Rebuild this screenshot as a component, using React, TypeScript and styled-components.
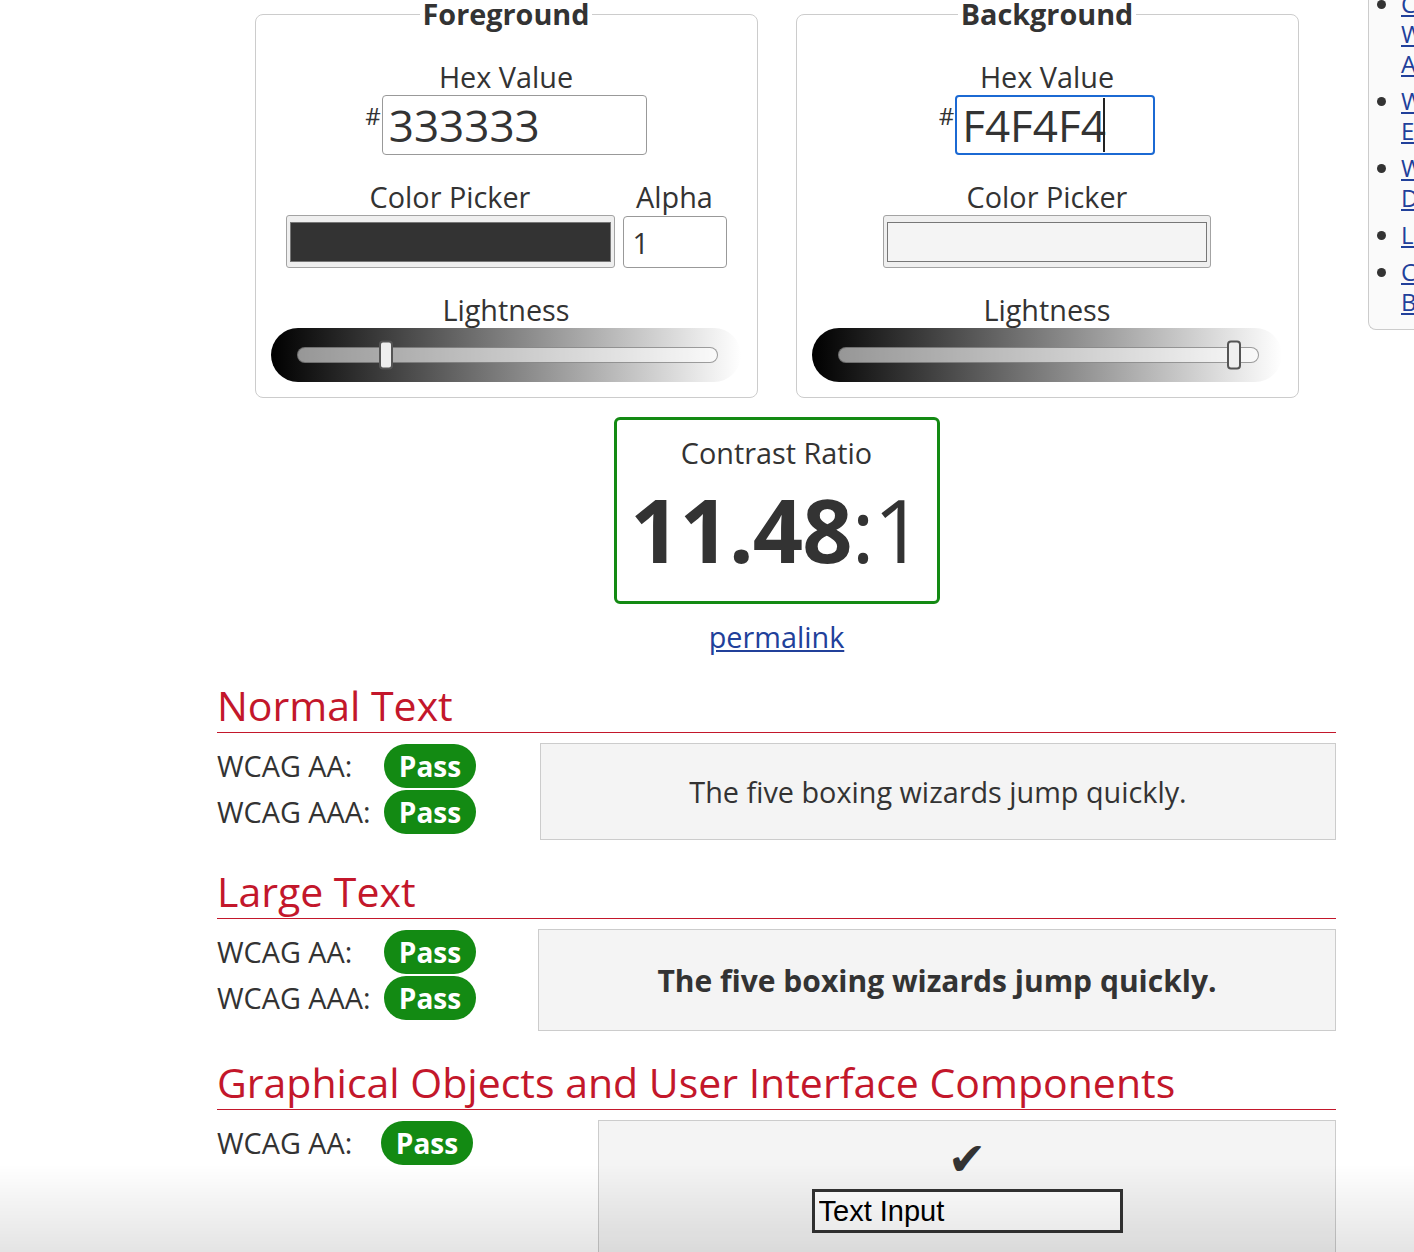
import React from "react";
import styled, { createGlobalStyle } from "styled-components";

const GlobalStyle = createGlobalStyle`
  html, body {
    margin: 0;
    padding: 0;
    background: #fff;
    overflow: hidden;
  }
  body {
    font-family: "Open Sans", "Noto Sans", sans-serif;
    color: #333;
  }
`;

const GREEN = "#138a13";
const RED = "#c3172b";
const LINK = "#21409a";

const Page = styled.div`
  display: flex;
  align-items: flex-start;
  width: 1414px;
  box-sizing: border-box;
  padding-left: 217px;
  margin-top: -40px;
  overflow: hidden;
`;

const Main = styled.main`
  width: 1119px;
  flex-shrink: 0;
  padding-top: 35px;
`;

const Sidebar = styled.aside`
  width: 153px;
  flex-shrink: 0;
  margin-left: 32px;
  background: #fafafa;
  border-left: 1px solid #ccc;
  border-bottom: 1px solid #ccc;
  border-bottom-left-radius: 8px;
`;

const SideList = styled.ul`
  margin: 0;
  padding: 29px 0 12px 32px;
  font-size: 24px;
  line-height: 30px;
  li + li {
    margin-top: 7px;
  }
  a {
    color: ${LINK};
    text-decoration: underline;
  }
`;

const PickerRow = styled.div`
  display: flex;
  justify-content: center;
  gap: 38px;
`;

const Fieldset = styled.fieldset`
  width: 503px;
  box-sizing: border-box;
  min-width: 0;
  margin: 0;
  padding: 26px 15px 15px;
  border: 1px solid #ccc;
  border-radius: 8px;
`;

const Legend = styled.legend`
  margin: 0 auto;
  padding: 0 3px;
  font-size: 28.8px;
  font-weight: 700;
  line-height: 38px;
  color: #333;
`;

const Inner = styled.div`
  display: flex;
  flex-direction: column;
  align-items: center;
`;

const Label = styled.div<{ $gap?: number }>`
  font-size: 28.8px;
  line-height: 36px;
  text-align: center;
  white-space: nowrap;
  margin-top: ${(p) => p.$gap ?? 0}px;
`;

const HexGroup = styled.div`
  display: flex;
  align-items: flex-start;
  height: 60px;
`;

const Hash = styled.span`
  font-size: 24px;
  line-height: 30px;
  margin-top: 6px;
  margin-right: 1px;
`;

const HexBox = styled.div`
  position: relative;
`;

const HexInput = styled.input<{ $width: number; $focused?: boolean }>`
  width: ${(p) => p.$width}px;
  height: 60px;
  box-sizing: border-box;
  border: ${(p) => (p.$focused ? "2px solid #1b69d3" : "1px solid #999")};
  border-radius: 4px;
  padding: 0 ${(p) => (p.$focused ? 5 : 6)}px;
  font-family: "Open Sans", sans-serif;
  font-size: 44px;
  color: #333;
  background: #fff;
  outline: none;
`;

const Caret = styled.span`
  position: absolute;
  top: 3px;
  bottom: 3px;
  width: 2px;
  background: #222;
`;

const PickerColumns = styled.div`
  display: flex;
  gap: 8px;
  align-items: flex-start;
`;

const Column = styled.div`
  display: flex;
  flex-direction: column;
  align-items: center;
`;

const Swatch = styled.div<{ $width: number }>`
  width: ${(p) => p.$width}px;
  height: 53px;
  box-sizing: border-box;
  display: flex;
  padding: 6px 3px 5px;
  background: #efefef;
  border: 1px solid #a3a3a3;
  border-radius: 3px;
`;

const SwatchColor = styled.div<{ $color: string }>`
  flex: 1;
  background: ${(p) => p.$color};
  border: 1px solid #777;
`;

const AlphaInput = styled.input`
  width: 104px;
  height: 52px;
  box-sizing: border-box;
  margin-top: 1px;
  border: 1px solid #999;
  border-radius: 4px;
  padding: 0 9px;
  font-family: "Open Sans", sans-serif;
  font-size: 28.8px;
  color: #333;
  outline: none;
`;

const Slider = styled.div`
  width: 470px;
  height: 54px;
  box-sizing: border-box;
  display: flex;
  align-items: center;
  padding: 0 23px 0 26px;
  border-radius: 27px;
  background: linear-gradient(to right, #000, #fff);
`;

const Rail = styled.div`
  position: relative;
  flex: 1;
  height: 16px;
  box-sizing: border-box;
  border: 1px solid rgba(80, 80, 80, 0.55);
  border-radius: 8px;
  background: rgba(255, 255, 255, 0.57);
`;

const Thumb = styled.div`
  position: absolute;
  top: 50%;
  width: 14px;
  height: 29px;
  box-sizing: border-box;
  transform: translateY(-50%);
  background: #efefef;
  border: 2px solid #555;
  border-radius: 4px;
`;

const ContrastBox = styled.div`
  width: 326px;
  height: 187px;
  box-sizing: border-box;
  margin: 19px auto 0;
  padding-top: 14px;
  border: 3px solid ${GREEN};
  border-radius: 6px;
  text-align: center;
`;

const RatioLabel = styled.div`
  font-size: 28.8px;
  line-height: 38px;
`;

const RatioValue = styled.div`
  margin-top: 7px;
  font-size: 88px;
  line-height: 100px;
  letter-spacing: -1px;
  b {
    font-weight: 700;
  }
`;

const Permalink = styled.a`
  display: block;
  width: fit-content;
  margin: 15px auto 0;
  font-size: 28.8px;
  line-height: 36px;
  color: ${LINK};
  text-decoration: underline;
`;

const Heading = styled.h2<{ $gap: number }>`
  margin: ${(p) => p.$gap}px 0 0;
  padding-bottom: 3px;
  font-size: 41px;
  font-weight: 400;
  line-height: 48px;
  color: ${RED};
  border-bottom: 1px solid ${RED};
`;

const Result = styled.div<{ $left: number }>`
  display: grid;
  grid-template-columns: ${(p) => p.$left}px 1fr;
  margin-top: 10px;
  align-items: start;
`;

const Checks = styled.div`
  display: flex;
  flex-direction: column;
`;

const CheckRow = styled.div`
  display: flex;
  align-items: center;
  height: 46px;
`;

const CheckLabel = styled.span<{ $width: number }>`
  width: ${(p) => p.$width}px;
  font-size: 28.8px;
  line-height: 36px;
  white-space: nowrap;
`;

const Badge = styled.span`
  display: flex;
  align-items: center;
  justify-content: center;
  width: 92px;
  height: 44px;
  border-radius: 22px;
  background: ${GREEN};
  color: #fff;
  font-size: 28px;
  font-weight: 700;
`;

const Sample = styled.div<{ $height: number; $bold?: boolean }>`
  height: ${(p) => p.$height}px;
  box-sizing: border-box;
  display: flex;
  align-items: center;
  justify-content: center;
  background: #f4f4f4;
  border: 1px solid #ccc;
  color: #333;
  font-size: ${(p) => (p.$bold ? 30 : 28.8)}px;
  font-weight: ${(p) => (p.$bold ? 700 : 400)};
`;

const UiSample = styled.div`
  display: flex;
  flex-direction: column;
  align-items: center;
  padding: 16px 0 40px;
  background: #f4f4f4;
  border: 1px solid #ccc;
`;

const Check = styled.span`
  font-family: "DejaVu Sans", sans-serif;
  font-size: 46px;
  line-height: 44px;
  color: #333;
`;

const DemoInput = styled.input`
  width: 311px;
  height: 44px;
  box-sizing: border-box;
  margin-top: 8px;
  padding: 0 4px;
  border: 3px solid #333;
  background: #fff;
  font-family: "Liberation Sans", Arial, sans-serif;
  font-size: 29px;
  color: #000;
  outline: none;
`;

const Fade = styled.div`
  position: fixed;
  left: 0;
  right: 0;
  bottom: 0;
  height: 88px;
  pointer-events: none;
  background: linear-gradient(to bottom, rgba(0, 0, 0, 0), rgba(0, 0, 0, 0.105));
`;

function LightnessSlider({ value }: { value: number }) {
  return (
    <Slider>
      <Rail>
        <Thumb style={{ left: `calc((100% - 14px) * ${value})` }} />
      </Rail>
    </Slider>
  );
}

function PassRows({ labels, width }: { labels: string[]; width: number }) {
  return (
    <Checks>
      {labels.map((l) => (
        <CheckRow key={l}>
          <CheckLabel $width={width}>{l}</CheckLabel>
          <Badge>Pass</Badge>
        </CheckRow>
      ))}
    </Checks>
  );
}

const links = [
  "Color Wheel Accessibility",
  "WAVE Extension",
  "WebAIM Design",
  "Links",
  "Color Blindness",
];

export default function App() {
  return (
    <>
      <GlobalStyle />
      <Page>
        <Main>
          <PickerRow>
            <Fieldset>
              <Legend>Foreground</Legend>
              <Inner>
                <Label>Hex Value</Label>
                <HexGroup>
                  <Hash>#</Hash>
                  <HexInput $width={265} defaultValue="333333" />
                </HexGroup>
                <PickerColumns>
                  <Column>
                    <Label $gap={24}>Color Picker</Label>
                    <Swatch $width={329}>
                      <SwatchColor $color="#333333" />
                    </Swatch>
                  </Column>
                  <Column>
                    <Label $gap={24}>Alpha</Label>
                    <AlphaInput defaultValue="1" />
                  </Column>
                </PickerColumns>
                <Label $gap={24}>Lightness</Label>
                <LightnessSlider value={0.2} />
              </Inner>
            </Fieldset>
            <Fieldset>
              <Legend>Background</Legend>
              <Inner>
                <Label>Hex Value</Label>
                <HexGroup>
                  <Hash>#</Hash>
                  <HexBox>
                    <HexInput $width={200} $focused defaultValue="F4F4F4" />
                    <Caret style={{ left: 148 }} />
                  </HexBox>
                </HexGroup>
                <Label $gap={24}>Color Picker</Label>
                <Swatch $width={328}>
                  <SwatchColor $color="#f4f4f4" />
                </Swatch>
                <Label $gap={24}>Lightness</Label>
                <LightnessSlider value={0.957} />
              </Inner>
            </Fieldset>
          </PickerRow>

          <ContrastBox>
            <RatioLabel>Contrast Ratio</RatioLabel>
            <RatioValue>
              <b>11.48</b>:1
            </RatioValue>
          </ContrastBox>
          <Permalink href="#">permalink</Permalink>

          <Heading $gap={26}>Normal Text</Heading>
          <Result $left={323}>
            <PassRows labels={["WCAG AA:", "WCAG AAA:"]} width={167} />
            <Sample $height={97}>The five boxing wizards jump quickly.</Sample>
          </Result>

          <Heading $gap={27}>Large Text</Heading>
          <Result $left={321}>
            <PassRows labels={["WCAG AA:", "WCAG AAA:"]} width={167} />
            <Sample $height={102} $bold>
              The five boxing wizards jump quickly.
            </Sample>
          </Result>

          <Heading $gap={27}>Graphical Objects and User Interface Components</Heading>
          <Result $left={381}>
            <PassRows labels={["WCAG AA:"]} width={164} />
            <UiSample>
              <Check>✔</Check>
              <DemoInput defaultValue="Text Input" />
            </UiSample>
          </Result>
        </Main>
        <Sidebar>
          <SideList>
            {links.map((l) => (
              <li key={l}>
                <a href="#">{l}</a>
              </li>
            ))}
          </SideList>
        </Sidebar>
      </Page>
      <Fade />
    </>
  );
}
